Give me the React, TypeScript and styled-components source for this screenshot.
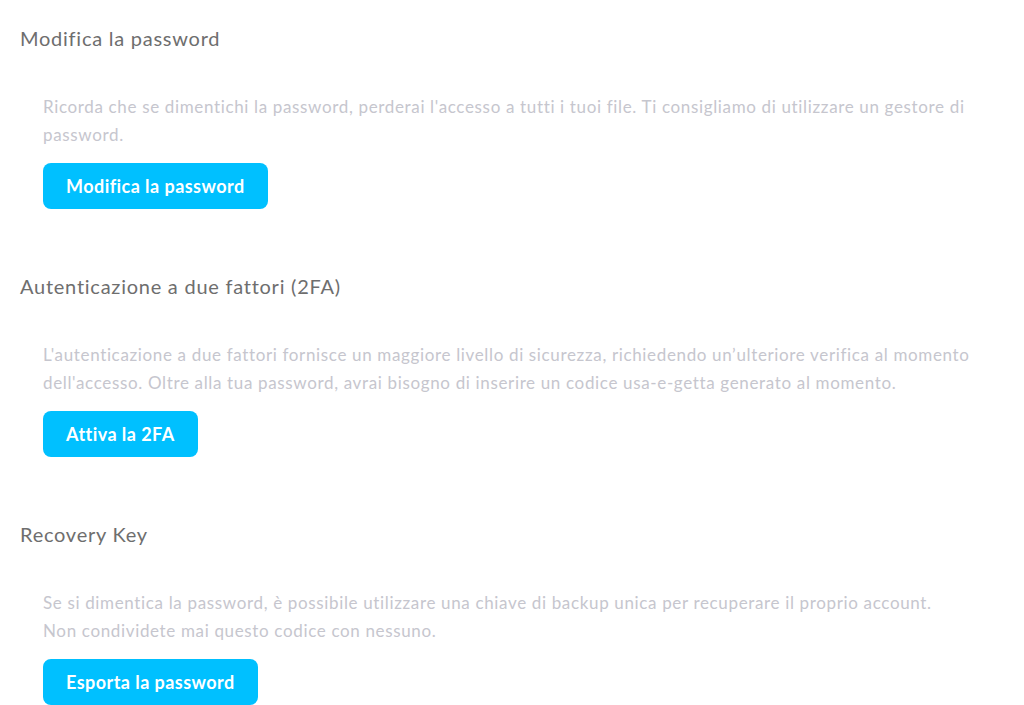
import styled, { createGlobalStyle } from 'styled-components';

const GlobalStyle = createGlobalStyle`
  body {
    margin: 0;
    background: #ffffff;
    font-family: 'Lato', 'Noto Sans', sans-serif;
  }
`;

const Page = styled.div`
  display: flex;
  flex-direction: column;
  gap: 65px;
  padding: 26px 40px 0 20px;
`;

const Section = styled.section`
  display: flex;
  flex-direction: column;
`;

const Title = styled.h2`
  margin: 0;
  font-size: 20px;
  line-height: 24px;
  font-weight: 400;
  color: #6e6e6e;
  letter-spacing: 0.75px;
`;

const Body = styled.div`
  display: flex;
  flex-direction: column;
  align-items: flex-start;
  gap: 14px;
  margin-top: 43px;
  padding-left: 23px;
`;

const Text = styled.p`
  margin: 0;
  max-width: 940px;
  font-size: 17px;
  line-height: 28px;
  font-weight: 400;
  color: #c6c6ce;
  letter-spacing: 0.65px;
`;

const Button = styled.button`
  height: 46px;
  padding: 0 23px;
  border: none;
  border-radius: 8px;
  background: #00c0ff;
  color: #ffffff;
  font-family: inherit;
  font-size: 18px;
  font-weight: 700;
  letter-spacing: 0.45px;
  cursor: pointer;
`;

const sections = [
  {
    title: 'Modifica la password',
    text: "Ricorda che se dimentichi la password, perderai l'accesso a tutti i tuoi file. Ti consigliamo di utilizzare un gestore di password.",
    action: 'Modifica la password',
  },
  {
    title: 'Autenticazione a due fattori (2FA)',
    text: "L'autenticazione a due fattori fornisce un maggiore livello di sicurezza, richiedendo un’ulteriore verifica al momento dell'accesso. Oltre alla tua password, avrai bisogno di inserire un codice usa-e-getta generato al momento.",
    action: 'Attiva la 2FA',
  },
  {
    title: 'Recovery Key',
    text: 'Se si dimentica la password, è possibile utilizzare una chiave di backup unica per recuperare il proprio account. Non\u00a0condividete mai questo codice con nessuno.',
    action: 'Esporta la password',
  },
];

const App = () => {
  return (
    <>
      <GlobalStyle />
      <Page>
        {sections.map((s) => (
          <Section key={s.title}>
            <Title>{s.title}</Title>
            <Body>
              <Text>{s.text}</Text>
              <Button>{s.action}</Button>
            </Body>
          </Section>
        ))}
      </Page>
    </>
  );
};

export default App;
